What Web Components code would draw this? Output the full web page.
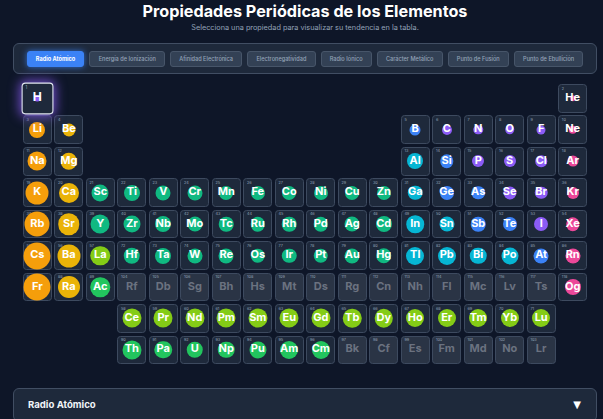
<!DOCTYPE html>
<html lang="es">
<head>
<meta charset="utf-8">
<title>Propiedades Periódicas de los Elementos</title>
<style>
  html, body { margin: 0; height: 100%; overflow: hidden; }
  body {
    background: #0e1628;
    color: #f1f5f9;
    font-family: Inter, "Liberation Sans", sans-serif;
    padding: 0 6px 0 13px;
    box-sizing: border-box;
  }
</style>
</head>
<body>
<page-header heading="Propiedades Periódicas de los Elementos" sub="Selecciona una propiedad para visualizar su tendencia en la tabla."></page-header>
<property-bar>
  <property-button active>Radio Atómico</property-button>
  <property-button>Energía de Ionización</property-button>
  <property-button>Afinidad Electrónica</property-button>
  <property-button>Electronegatividad</property-button>
  <property-button>Radio Iónico</property-button>
  <property-button>Carácter Metálico</property-button>
  <property-button>Punto de Fusión</property-button>
  <property-button>Punto de Ebullición</property-button>
</property-bar>
<periodic-table></periodic-table>
<detail-panel>Radio Atómico</detail-panel>

<script>
class PageHeader extends HTMLElement {
  connectedCallback() {
    this.attachShadow({ mode: 'open' }).innerHTML = `
      <style>
        :host { display: block; text-align: center; height: 43px; }
        h1 { margin: 0; font-size: 16.2px; line-height: 22px; font-weight: 700; color: #fff; }
        p { margin: 1px 0 0; font-size: 7.3px; line-height: 10px; color: #94a3b8; }
      </style>
      <h1>${this.getAttribute('heading')}</h1>
      <p>${this.getAttribute('sub')}</p>
    `;
  }
}

class PropertyBar extends HTMLElement {
  connectedCallback() {
    this.attachShadow({ mode: 'open' }).innerHTML = `
      <style>
        :host {
          display: flex; justify-content: center; gap: 5px;
          height: 31px; box-sizing: border-box; padding: 7px 0;
          background: #1e293b; border: 1px solid #414e63; border-radius: 6px;
        }
      </style>
      <slot></slot>
    `;
  }
}

class PropertyButton extends HTMLElement {
  connectedCallback() {
    this.attachShadow({ mode: 'open' }).innerHTML = `
      <style>
        :host {
          display: flex; align-items: center; height: 16px; box-sizing: border-box;
          padding: 0 8.2px; font-size: 5.6px; font-weight: 500; white-space: nowrap;
          color: #94a3b8; background: #334155; border: 1px solid #475569; border-radius: 3px;
        }
        :host([active]) {
          color: #fff; font-weight: 700; background: #3b82f6; border-color: #3b82f6;
          box-shadow: 0 0 6px rgba(59, 130, 246, .8);
        }
      </style>
      <slot></slot>
    `;
  }
}

class ElementCell extends HTMLElement {
  connectedCallback() {
    const size = this.getAttribute('size');
    this.attachShadow({ mode: 'open' }).innerHTML = `
      <style>
        :host {
          display: flex; align-items: center; justify-content: center; position: relative;
          box-sizing: border-box; border: 1px solid #3d4a5f; border-radius: 3.5px; background: #1e293b;
          font-weight: 700; font-size: 11px; color: #fff;
        }
        :host([empty]) { background: #2a3445; color: #6b7280; }
        :host([selected]) {
          transform: scale(1.1); z-index: 2; border-color: #e2e8f0;
          box-shadow: 0 0 10px 2px rgba(139, 92, 246, .75);
        }
        .num { position: absolute; left: 2.5px; top: 1.5px; font-size: 3.8px; line-height: 4px; font-weight: 400; color: #94a3b8; }
        .dot { position: absolute; left: 50%; top: 50%; transform: translate(-50%, -50%); border-radius: 50%; }
        .sym { position: relative; margin-top: -2px; line-height: 1; }
      </style>
      <span class="num">${this.getAttribute('number')}</span>
      ${size ? `<span class="dot" style="width:${size}px;height:${size}px;background:${this.getAttribute('color')}"></span>` : ''}
      <span class="sym">${this.getAttribute('symbol')}</span>
    `;
  }
}

const COLORS = {
  a: '#f59e0b', e: '#eab308', l: '#84cc16', c: '#22c55e', t: '#10b981',
  p: '#06b6d4', m: '#3b82f6', n: '#8b5cf6', g: '#ec4899'
};

// symbol:family:circle size, rows in table order, '.' = blank cell
const ROWS = [
  ['H:n:5.5', '.*16', 'He:g:5.5'],
  ['Li:a:16', 'Be:e:13', '.*10', 'B:m:11', 'C:n:10', 'N:n:9.5', 'O:n:9.5', 'F:n:9', 'Ne:g:8.5'],
  ['Na:a:19', 'Mg:e:16.5', '.*10', 'Al:p:16', 'Si:m:13.5', 'P:n:12', 'S:n:12', 'Cl:n:11.5', 'Ar:g:11'],
  ['K:a:23', 'Ca:e:20', 'Sc:t:17', 'Ti:t:16', 'V:t:15', 'Cr:t:15', 'Mn:t:14', 'Fe:t:14', 'Co:t:14', 'Ni:t:14', 'Cu:t:14', 'Zn:t:14', 'Ga:p:14.5', 'Ge:m:14', 'As:m:13.5', 'Se:n:13', 'Br:n:12.5', 'Kr:g:12'],
  ['Rb:a:25', 'Sr:e:21.5', 'Y:t:19', 'Zr:t:17', 'Nb:t:16', 'Mo:t:15', 'Tc:t:14.5', 'Ru:t:14.5', 'Rh:t:14.5', 'Pd:t:14.5', 'Ag:t:15', 'Cd:t:16', 'In:p:17.5', 'Sn:p:15', 'Sb:m:14.5', 'Te:m:14', 'I:n:14', 'Xe:g:13.5'],
  ['Cs:a:27', 'Ba:e:23', 'La:l:19.5', 'Hf:t:16.5', 'Ta:t:16', 'W:t:15', 'Re:t:15', 'Os:t:14.5', 'Ir:t:14.5', 'Pt:t:14.5', 'Au:t:15', 'Hg:t:15.5', 'Tl:p:18', 'Pb:p:18', 'Bi:p:16.5', 'Po:p:17', 'At:m:15', 'Rn:g:15'],
  ['Fr:a:27', 'Ra:e:22', 'Ac:c:19.5', 'Rf', 'Db', 'Sg', 'Bh', 'Hs', 'Mt', 'Ds', 'Rg', 'Cn', 'Nh', 'Fl', 'Mc', 'Lv', 'Ts', 'Og:g:16'],
  ['.*3', 'Ce:l:19', 'Pr:l:19', 'Nd:l:19', 'Pm:l:19', 'Sm:l:19', 'Eu:l:19', 'Gd:l:19', 'Tb:l:18.5', 'Dy:l:18.5', 'Ho:l:18', 'Er:l:18', 'Tm:l:18', 'Yb:l:18', 'Lu:l:18'],
  ['.*3', 'Th:c:19', 'Pa:c:17.5', 'U:c:16.5', 'Np:c:16.5', 'Pu:c:17', 'Am:c:18', 'Cm:c:18', 'Bk', 'Cf', 'Es', 'Fm', 'Md', 'No', 'Lr']
];

function numbersFor(row) {
  const run = (start, length) => Array.from({ length }, (_, i) => start + i);
  if (row === 0) return [1, 2];
  if (row === 1) return run(3, 8);
  if (row === 2) return run(11, 8);
  if (row === 3) return run(19, 18);
  if (row === 4) return run(37, 18);
  if (row === 5) return [55, 56, 57].concat(run(72, 15));
  if (row === 6) return [87, 88, 89].concat(run(104, 15));
  if (row === 7) return run(58, 14);
  return run(90, 14);
}

class PeriodicTable extends HTMLElement {
  connectedCallback() {
    const root = this.attachShadow({ mode: 'open' });
    root.innerHTML = `
      <style>
        :host {
          display: grid; margin: 10px 10px 0 10px;
          grid-template-columns: repeat(18, 1fr); grid-auto-rows: 28.6px; gap: 2.87px;
        }
      </style>
    `;
    ROWS.forEach((cells, r) => {
      const nums = numbersFor(r);
      let n = 0, col = 1;
      cells.forEach(c => {
        if (c[0] === '.') { col += Number(c.slice(2)); return; }
        const [symbol, family, size] = c.split(':');
        const cell = document.createElement('element-cell');
        cell.setAttribute('symbol', symbol);
        cell.setAttribute('number', nums[n++]);
        if (size) {
          cell.setAttribute('size', size);
          cell.setAttribute('color', COLORS[family]);
        } else {
          cell.setAttribute('empty', '');
        }
        if (symbol === 'H') cell.setAttribute('selected', '');
        cell.style.gridRow = r + 1;
        cell.style.gridColumn = col++;
        root.appendChild(cell);
      });
    });
  }
}

class DetailPanel extends HTMLElement {
  connectedCallback() {
    this.attachShadow({ mode: 'open' }).innerHTML = `
      <style>
        :host {
          display: flex; justify-content: space-between; align-items: center;
          height: 34px; margin-top: 23.6px; box-sizing: border-box; padding: 0 15px 0 14px;
          background: #1e293b; border: 1px solid #414e63; border-radius: 6px;
          font-size: 9.6px; font-weight: 700; color: #f1f5f9;
        }
        .arrow { font-family: "DejaVu Sans", sans-serif; font-size: 10px; color: #fff; }
      </style>
      <slot></slot>
      <span class="arrow">▼</span>
    `;
  }
}

customElements.define('page-header', PageHeader);
customElements.define('property-bar', PropertyBar);
customElements.define('property-button', PropertyButton);
customElements.define('element-cell', ElementCell);
customElements.define('periodic-table', PeriodicTable);
customElements.define('detail-panel', DetailPanel);
</script>
</body>
</html>
